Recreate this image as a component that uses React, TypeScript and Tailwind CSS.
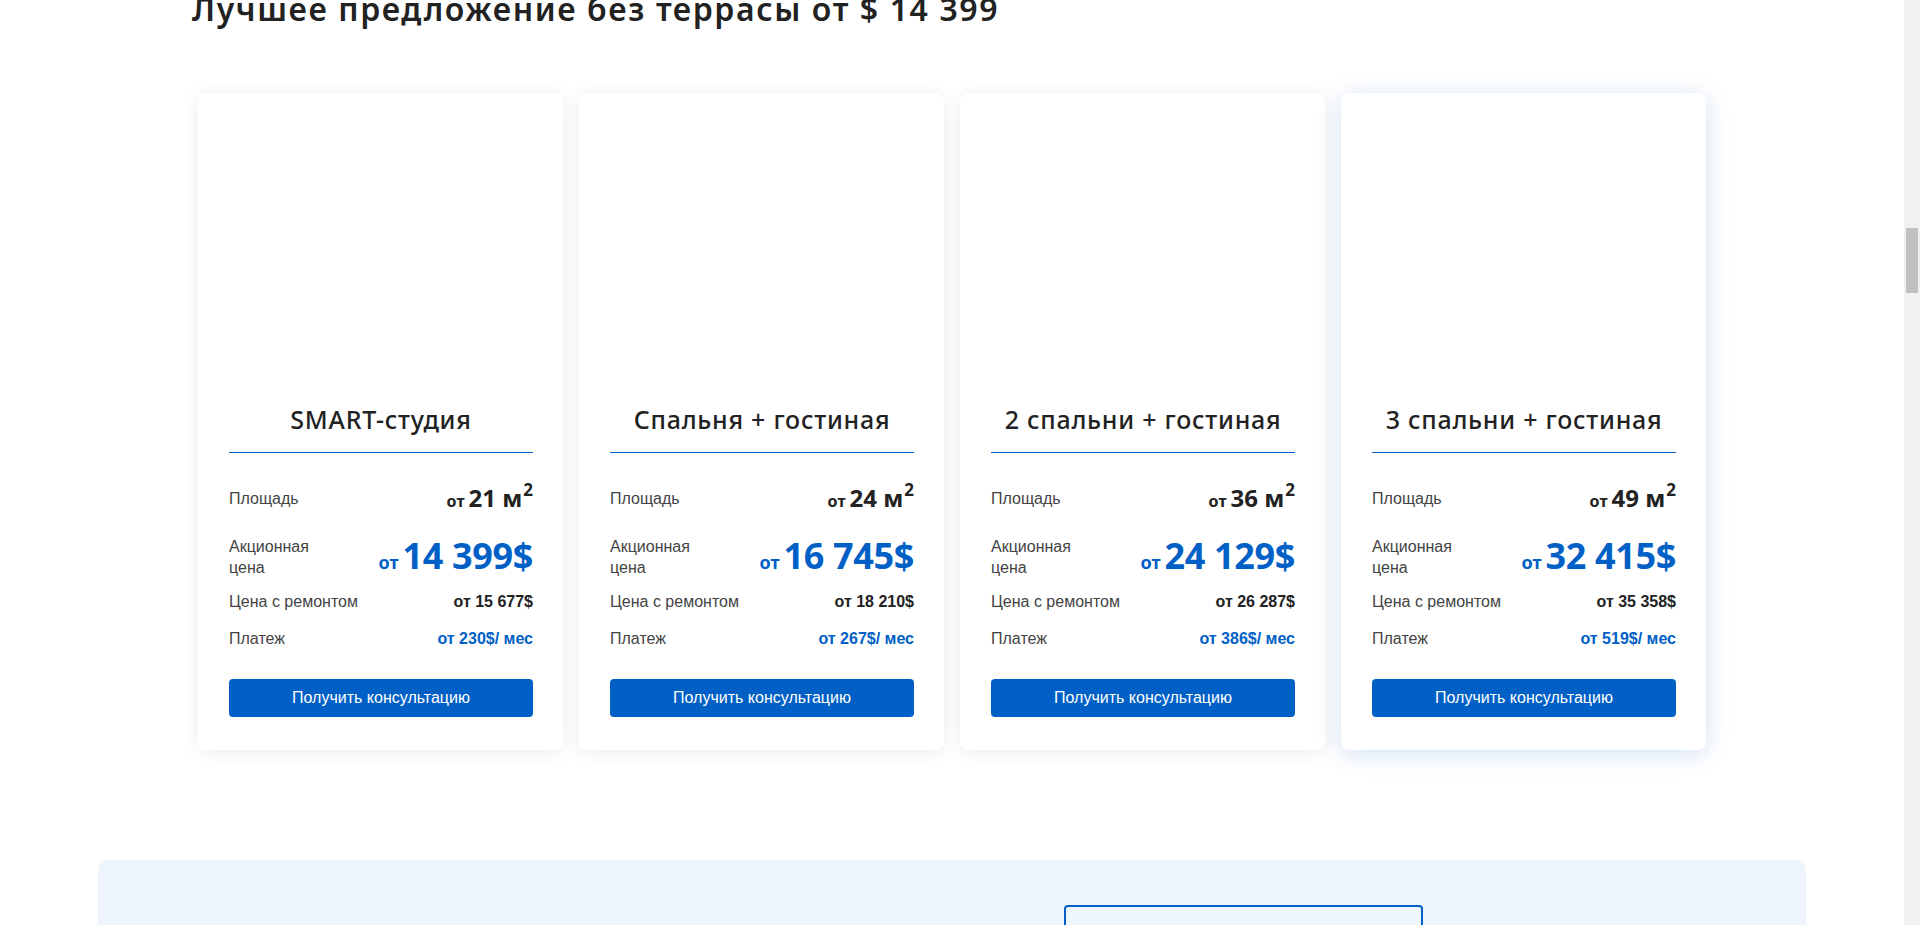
import React from 'react';

interface Offer {
  title: string;
  area: string;
  price: string;
  repair: string;
  payment: string;
  active?: boolean;
}

const offers: Offer[] = [
  { title: 'SMART-студия', area: '21', price: '14 399$', repair: 'от 15 677$', payment: 'от 230$/ мес' },
  { title: 'Спальня + гостиная', area: '24', price: '16 745$', repair: 'от 18 210$', payment: 'от 267$/ мес' },
  { title: '2 спальни + гостиная', area: '36', price: '24 129$', repair: 'от 26 287$', payment: 'от 386$/ мес' },
  { title: '3 спальни + гостиная', area: '49', price: '32 415$', repair: 'от 35 358$', payment: 'от 519$/ мес', active: true },
];

const head = "font-['Noto_Sans','Open_Sans',sans-serif]";
const body = "font-['Liberation_Sans',Arial,sans-serif]";

const OfferCard: React.FC<{ offer: Offer }> = ({ offer }) => {
  return (
    <div
      className={`w-[365px] h-[657px] bg-white rounded-[8px] flex flex-col pl-[31px] pr-[30px] ${
        offer.active
          ? 'shadow-[0_4px_24px_rgba(0,86,180,0.18)]'
          : 'shadow-[0_2px_18px_rgba(0,0,0,0.08)]'
      }`}
    >
      {/* photo slot (image not loaded) */}
      <div className="h-[309px]" />

      <h3
        className={`${head} text-center text-[25px] leading-[34px] font-medium tracking-[0.03em] text-[#222] pb-[16px]`}
      >
        {offer.title}
      </h3>
      <div className="h-[1px] bg-[#0060c6]" />

      <div className="mt-[28px] h-[36px] flex items-center justify-between">
        <span className={`${body} text-[16px] text-[#444]`}>Площадь</span>
        <span className={`${head} font-bold text-[#222] leading-[28px] flex items-baseline`}>
          <span className="text-[16px] mr-[4px]">от</span>
          <span className="text-[24px]">{offer.area} м</span>
          <span className="text-[17px] relative -top-[11px] ml-[1px]">2</span>
        </span>
      </div>

      <div className="mt-[17px] h-[46px] flex items-center justify-between">
        <span className={`${body} text-[16px] leading-[21px] text-[#444]`}>
          Акционная
          <br />
          цена
        </span>
        <span className={`${head} font-bold text-[#0060c6] leading-[40px] flex items-baseline pt-[4px]`}>
          <span className="text-[18px] mr-[4px]">от</span>
          <span className="text-[36px] tracking-[-0.01em]">{offer.price}</span>
        </span>
      </div>

      <div className="mt-[12px] h-[20px] flex items-center justify-between">
        <span className={`${body} text-[16px] text-[#444]`}>Цена с ремонтом</span>
        <span className={`${body} text-[16px] font-bold text-[#222]`}>{offer.repair}</span>
      </div>

      <div className="mt-[17px] h-[20px] flex items-center justify-between">
        <span className={`${body} text-[16px] text-[#444]`}>Платеж</span>
        <span className={`${body} text-[16px] font-bold text-[#0060c6]`}>{offer.payment}</span>
      </div>

      <button
        className={`${body} mt-[30px] h-[38px] w-full rounded-[4px] bg-[#0060c6] text-white text-[16px]`}
      >
        Получить консультацию
      </button>
    </div>
  );
};

const App: React.FC = () => {
  return (
    <div className="h-[925px] w-full overflow-hidden flex bg-white">
      <main className="flex-1 flex flex-col">
        <div className="w-[1508px] mx-auto">
          <h2
            className={`${head} -mt-[11px] -ml-[6px] text-[32px] leading-[40px] font-semibold tracking-[0.05em] text-[#222]`}
          >
            Лучшее предложение без террасы от $ 14 399
          </h2>

          <div className="mt-[64px] flex gap-[16px]">
            {offers.map(o => (
              <OfferCard key={o.title} offer={o} />
            ))}
          </div>
        </div>

        {/* Consultation form block */}
        <section className="mt-[110px] w-[1708px] mx-auto flex-1 bg-[#eff5fc] rounded-t-[10px] flex pt-[45px]">
          <div className="w-[966px]" />
          <div className="w-[359px] h-[52px] border-2 border-[#0060c6] rounded-[4px] px-[14px] pt-[14px]">
            <span className={`${body} text-[15px] text-[#999]`}>Имя</span>
          </div>
        </section>
      </main>

      {/* browser scrollbar */}
      <div className="w-[16px] bg-[#f1f1f1] flex flex-col">
        <div className="mt-[228px] mx-[2px] h-[65px] bg-[#c1c1c1]" />
      </div>
    </div>
  );
};

export default App;
